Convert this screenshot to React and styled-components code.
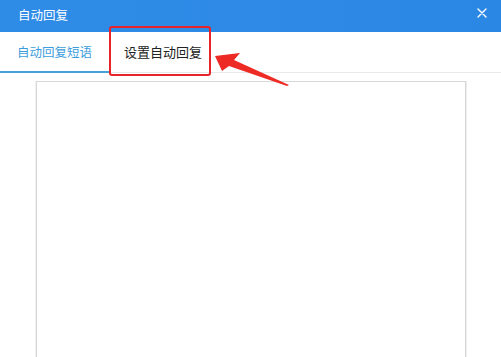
import React from 'react';
import styled, {createGlobalStyle} from 'styled-components';

const GlobalStyle = createGlobalStyle`
  html, body {
    margin: 0;
    padding: 0;
    background: #ffffff;
    overflow: hidden;
  }
  body {
    font-family: "Noto Sans CJK SC", "Liberation Sans", sans-serif;
  }
`;

const Dialog = styled.div`
  position: relative;
  width: 501px;
  height: 357px;
  display: flex;
  flex-direction: column;
  background: #fff;
  overflow: hidden;
`;

const Header = styled.div`
  height: 32px;
  flex-shrink: 0;
  display: flex;
  align-items: center;
  justify-content: space-between;
  padding: 0 8px 0 18px;
  background: linear-gradient(90deg, #2f8ce6 0%, #2b87e4 100%);
  color: #fff;
`;

const Title = styled.div`
  font-size: 12.5px;
  line-height: 1;
  padding-bottom: 1px;
`;

const Close = styled.button`
  width: 22px;
  height: 22px;
  padding: 0;
  border: 0;
  background: transparent;
  display: flex;
  align-items: center;
  justify-content: center;
  margin-top: -6px;
`;

const TabBar = styled.div`
  height: 40px;
  flex-shrink: 0;
  display: flex;
  border-bottom: 1px solid #e6e9ec;
`;

const Tab = styled.div`
  position: relative;
  display: flex;
  align-items: center;
  padding: 0 ${p => p.$active ? 17 : 15}px;
  font-size: ${p => p.$active ? '12.5px' : '13px'};
  color: ${p => p.$active ? '#3d9ddc' : '#222'};
  border-bottom: 2px solid ${p => p.$active ? '#47a2d9' : 'transparent'};
  margin-bottom: -1px;
`;

const Highlight = styled.div`
  position: absolute;
  left: 0;
  top: -6px;
  width: 102px;
  height: 50px;
  box-sizing: border-box;
  border: 2.5px solid #e8242a;
  border-radius: 3px;
`;

const Arrow = styled.svg`
  position: absolute;
  left: 205px;
  top: 45px;
  pointer-events: none;
`;

const Body = styled.div`
  flex: 1;
  display: flex;
  justify-content: center;
  padding-top: 8px;
  min-height: 0;
  overflow: hidden;
`;

const Editor = styled.div`
  width: 430px;
  height: 100%;
  box-sizing: border-box;
  border: 1px solid #d8d8d8;
  border-bottom: none;
  box-shadow: 1px 0 0 #eeeeee, -1px 0 0 #f0f0f0;
  background: #fff;
`;

export default function App() {
  return (
    <Dialog>
      <GlobalStyle/>
      <Header>
        <Title>自动回复</Title>
        <Close aria-label="close">
          <svg width="10" height="10" viewBox="0 0 10 10">
            <path d="M1 1 L9 9 M9 1 L1 9" stroke="#fff" strokeWidth="1.4" strokeLinecap="round"/>
          </svg>
        </Close>
      </Header>
      <TabBar>
        <Tab $active>自动回复短语</Tab>
        <Tab>
          设置自动回复
          <Highlight/>
        </Tab>
      </TabBar>
      <Body>
        <Editor/>
      </Body>
      <Arrow width="90" height="45" viewBox="0 0 90 45">
        <polygon points="10,11 35,8 29,15 84,40 82,41 24,21 17,26" fill="#ee2a24"/>
      </Arrow>
    </Dialog>
  );
}
